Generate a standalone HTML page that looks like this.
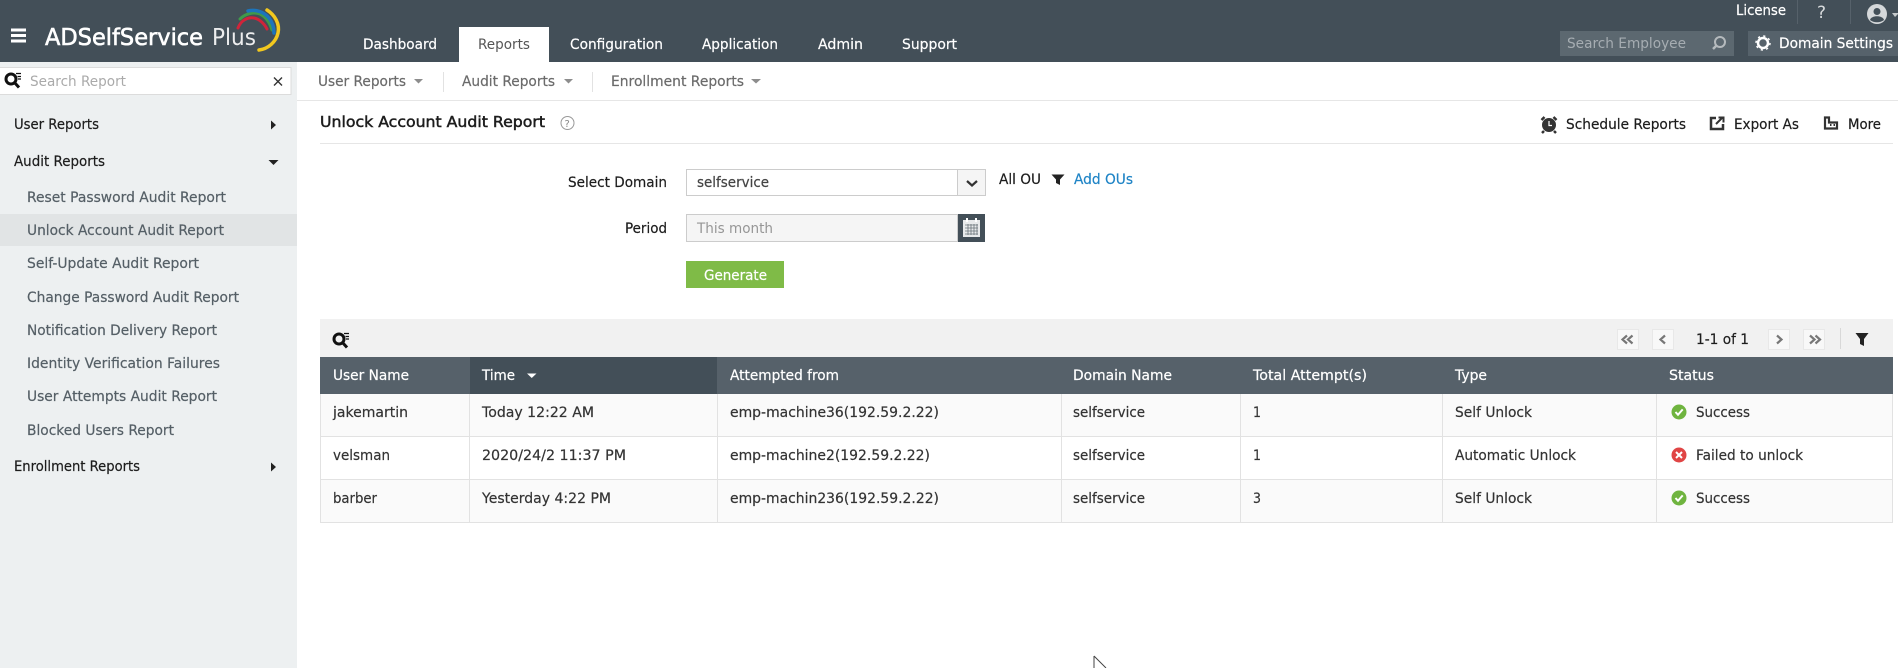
<!DOCTYPE html>
<html lang="en"><head><meta charset="utf-8"><title>Unlock Account Audit Report</title>
<style>
html,body{margin:0;padding:0;width:1898px;height:668px;overflow:hidden;background:#fff}
svg{display:block}
text{font-family:"DejaVu Sans","Liberation Sans",sans-serif;font-size:14px;fill:#333;stroke-width:.2}
.w{fill:#fff;stroke:#fff}.s{fill:#555f66;stroke:#555f66}.g{fill:#6b6b6b;stroke:#6b6b6b}.d{fill:#1d1d1d;stroke:#1d1d1d}
</style></head><body>
<svg width="1898" height="668" viewBox="0 0 1898 668" xmlns="http://www.w3.org/2000/svg">
<defs><g id="mag"><circle cx="7" cy="7" r="5" fill="none" stroke="#111" stroke-width="3"/><path d="M10.5 10.5L15 15.5" stroke="#111" stroke-width="3"/><path d="M12 1.5h5M13.5 4.5h3.5M14 7h3" stroke="#111" stroke-width="1.2"/></g>
<g id="ok"><circle r="7.5" fill="#6fb43f"/><path d="M-3.5 0L-1 2.8L3.7-2.6" fill="none" stroke="#fff" stroke-width="2"/></g></defs>
<rect width="1898" height="62" fill="#434f58"/>
<path d="M11 30h15M11 35.500h15M11 41h15" stroke="#fff" stroke-width="3"/>
<text x="45" y="45" textLength="158" lengthAdjust="spacingAndGlyphs" class="w" style="font-size:23.500px;stroke-width:.6">ADSelfService</text>
<text x="212" y="45" textLength="44" lengthAdjust="spacingAndGlyphs" class="w" style="font-size:23.500px;opacity:.9;stroke-width:0">Plus</text>
<g fill="none" stroke-linecap="round">
<path d="M238 28C241 20 248 17 254 18C259 19 264 23 267 29" stroke="#d0243a" stroke-width="3"/>
<path d="M240 19C246 13 254 12 260 14C266 17 270 23 272 30" stroke="#3f9a4a" stroke-width="3"/>
<path d="M248 11C256 9 264 12 269 18C273 23 274 28 274 33" stroke="#1c75bc" stroke-width="3.500"/>
<path d="M267 10C275 15 280 24 278 33C276 42 268 49 259 50" stroke="#f2c81e" stroke-width="3.500"/>
</g>
<rect x="459" y="27" width="90" height="35" fill="#fff"/>
<text x="363" y="49" textLength="74" lengthAdjust="spacingAndGlyphs" class="w">Dashboard</text>
<text x="478" y="49" textLength="52" lengthAdjust="spacingAndGlyphs" style="fill:#555">Reports</text>
<text x="570" y="49" textLength="93" lengthAdjust="spacingAndGlyphs" class="w">Configuration</text>
<text x="702" y="49" textLength="76" lengthAdjust="spacingAndGlyphs" class="w">Application</text>
<text x="818" y="49" textLength="45" lengthAdjust="spacingAndGlyphs" class="w">Admin</text>
<text x="902" y="49" textLength="55" lengthAdjust="spacingAndGlyphs" class="w">Support</text>
<text x="1736" y="15" textLength="50" lengthAdjust="spacingAndGlyphs" class="w">License</text>
<path d="M1797.500 0v24M1850.500 0v24" stroke="#56616a"/>
<text x="1817" y="18" style="font-size:17px;fill:#d8dbdd">?</text>
<circle cx="1877" cy="14" r="10" fill="#d5d8da"/><circle cx="1877" cy="11.500" r="3.500" fill="#434f58"/><path d="M1870 20c1-5 13-5 14 0c-4 3-10 3-14 0z" fill="#434f58"/><path d="M1892 13h6v1l-3 3z" fill="#c5c9cb"/>
<rect x="1560" y="31" width="174" height="25" fill="#5c6870"/>
<text x="1567" y="48" textLength="119" lengthAdjust="spacingAndGlyphs" style="fill:#a6adb2">Search Employee</text>
<circle cx="1720" cy="42" r="5" fill="none" stroke="#b5babd" stroke-width="2"/><path d="M1716.500 45.500l-3.500 3.500" stroke="#b5babd" stroke-width="2.500"/>
<rect x="1748" y="31" width="150" height="25" fill="#56626b"/>
<circle cx="1763" cy="43" r="5" fill="none" stroke="#fff" stroke-width="2.500"/><circle cx="1763" cy="43" r="7" fill="none" stroke="#fff" stroke-width="1.500" stroke-dasharray="2.200 3.300"/>
<text x="1779" y="48" textLength="114" lengthAdjust="spacingAndGlyphs" class="w">Domain Settings</text>
<rect y="62" width="297" height="606" fill="#edf0f1"/>
<rect x="-1" y="67.500" width="292" height="27" fill="#fff" stroke="#dcdcdc"/>
<use href="#mag" x="4" y="72"/>
<text x="30" y="86" textLength="96" lengthAdjust="spacingAndGlyphs" style="fill:#aaa">Search Report</text>
<path d="M274 77.500l8 8M282 77.500l-8 8" stroke="#333" stroke-width="1.400"/>
<path d="M271 120.500l5 4.500l-5 4.500z" fill="#222"/><path d="M268.500 160h10l-5 5z" fill="#222"/><path d="M271 462.500l5 4.500l-5 4.500z" fill="#222"/>
<rect y="214" width="297" height="32" fill="#e1e4e5"/>
<text x="14" y="129" textLength="85" lengthAdjust="spacingAndGlyphs" class="d">User Reports</text>
<text x="14" y="166" textLength="91" lengthAdjust="spacingAndGlyphs" class="d">Audit Reports</text>
<text x="27" y="202" textLength="199" lengthAdjust="spacingAndGlyphs" class="s">Reset Password Audit Report</text>
<text x="27" y="235" textLength="197" lengthAdjust="spacingAndGlyphs" class="s">Unlock Account Audit Report</text>
<text x="27" y="268" textLength="172" lengthAdjust="spacingAndGlyphs" class="s">Self-Update Audit Report</text>
<text x="27" y="302" textLength="212" lengthAdjust="spacingAndGlyphs" class="s">Change Password Audit Report</text>
<text x="27" y="335" textLength="190" lengthAdjust="spacingAndGlyphs" class="s">Notification Delivery Report</text>
<text x="27" y="368" textLength="193" lengthAdjust="spacingAndGlyphs" class="s">Identity Verification Failures</text>
<text x="27" y="401" textLength="190" lengthAdjust="spacingAndGlyphs" class="s">User Attempts Audit Report</text>
<text x="27" y="435" textLength="147" lengthAdjust="spacingAndGlyphs" class="s">Blocked Users Report</text>
<text x="14" y="471" textLength="126" lengthAdjust="spacingAndGlyphs" class="d">Enrollment Reports</text>
<path d="M297 100.500H1898M320 143.500H1893" stroke="#e6e6e6"/>
<text x="318" y="86" textLength="88" lengthAdjust="spacingAndGlyphs" class="g">User Reports</text>
<path d="M414 79h9l-4.500 4.500zM564 79h9l-4.500 4.500zM751 79h10l-5 4.500z" fill="#8d8d8d"/>
<path d="M443.500 72v20M592.500 72v20" stroke="#e2e2e2"/>
<text x="462" y="86" textLength="93" lengthAdjust="spacingAndGlyphs" class="g">Audit Reports</text>
<text x="611" y="86" textLength="133" lengthAdjust="spacingAndGlyphs" class="g">Enrollment Reports</text>
<text x="320" y="127" textLength="225" lengthAdjust="spacingAndGlyphs" class="d" style="font-size:15.500px;stroke-width:.5">Unlock Account Audit Report</text>
<circle cx="567.500" cy="123" r="6.500" fill="none" stroke="#999"/><text x="564.500" y="127" style="font-size:10px;fill:#888">?</text>
<circle cx="1549" cy="125" r="7" fill="#333"/><path d="M1549 121v4.500h3" fill="none" stroke="#fff" stroke-width="1.200"/><path d="M1541.500 120l3-3M1556.500 120l-3-3M1544 131l-2 2M1554 131l2 2" stroke="#333" stroke-width="2.500"/>
<text x="1566" y="129" textLength="120" lengthAdjust="spacingAndGlyphs" class="d">Schedule Reports</text>
<path d="M1716 118h-5v11h12v-5" fill="none" stroke="#333" stroke-width="2.500"/><path d="M1716 124l6-6M1718.500 117.500h5v5" fill="none" stroke="#333" stroke-width="2"/>
<text x="1734" y="129" textLength="65" lengthAdjust="spacingAndGlyphs" class="d">Export As</text>
<path d="M1825 117.500v11h12v-6h-8v-5z" fill="none" stroke="#333" stroke-width="2.200"/><path d="M1830 125h1.500M1833.500 125h1.500" stroke="#333" stroke-width="2"/>
<text x="1848" y="129" textLength="33" lengthAdjust="spacingAndGlyphs" class="d">More</text>
<text x="568" y="187" textLength="99" lengthAdjust="spacingAndGlyphs" class="d">Select Domain</text>
<rect x="686.500" y="169.500" width="299" height="26" fill="#fff" stroke="#ccc"/>
<rect x="958" y="170" width="27" height="25" fill="#f5f5f5"/><path d="M957.500 170v25" stroke="#ccc"/>
<path d="M967 181l5 4.500l5-4.500" fill="none" stroke="#333" stroke-width="2.200"/>
<text x="697" y="187" textLength="72" lengthAdjust="spacingAndGlyphs" style="fill:#444;stroke:#444">selfservice</text>
<text x="999" y="184" textLength="42" lengthAdjust="spacingAndGlyphs" class="d">All OU</text>
<path d="M1051.500 174.500h13l-4.500 5v5.500l-4-2v-3.500z" fill="#222"/>
<text x="1074" y="184" textLength="59" lengthAdjust="spacingAndGlyphs" style="fill:#1f84c6;stroke:#1f84c6">Add OUs</text>
<text x="625" y="233" textLength="42" lengthAdjust="spacingAndGlyphs" class="d">Period</text>
<rect x="686.500" y="214.500" width="271" height="27" fill="#f5f5f5" stroke="#ccc"/>
<text x="697" y="233" textLength="76" lengthAdjust="spacingAndGlyphs" style="fill:#969696">This month</text>
<rect x="958" y="214" width="27" height="28" fill="#434f58"/>
<rect x="963" y="220" width="17" height="17" fill="#e8eaeb"/><path d="M967 218v4M976 218v4" stroke="#fff" stroke-width="2"/><path d="M965 225h13M965 228h13M965 231h13M965 234h13M968 224v11M971 224v11M974 224v11M977 224v11" stroke="#6a747b" stroke-width=".8"/>
<rect x="686" y="261" width="98" height="27" fill="#7fbb47"/>
<text x="704" y="280" textLength="63" lengthAdjust="spacingAndGlyphs" class="w">Generate</text>
<rect x="320" y="319" width="1573" height="38" fill="#f1f1f1"/>
<use href="#mag" x="332" y="332"/>
<g fill="#f8f8f8" stroke="#e8e8e8"><rect x="1617.500" y="329.500" width="21" height="20"/><rect x="1652.500" y="329.500" width="21" height="20"/><rect x="1768.500" y="329.500" width="21" height="20"/><rect x="1803.500" y="329.500" width="21" height="20"/></g>
<g fill="none" stroke="#777" stroke-width="2.200"><path d="M1627 335.500l-4.500 4l4.500 4M1632.500 335.500l-4.500 4l4.500 4M1665 335.500l-4.500 4l4.500 4M1777 335.500l4.500 4l-4.500 4M1810 335.500l4.500 4l-4.500 4M1815.500 335.500l4.500 4l-4.500 4"/></g>
<text x="1696" y="344" textLength="53" lengthAdjust="spacingAndGlyphs" class="d">1-1 of 1</text>
<path d="M1840.500 328v21" stroke="#d8d8d8"/>
<path d="M1855.500 333h13l-4.500 6v7l-4-2v-5z" fill="#222"/>
<rect x="320" y="357" width="1573" height="37" fill="#56616a"/>
<rect x="470" y="357" width="247" height="37" fill="#434f58"/>
<text x="333" y="380" textLength="76" lengthAdjust="spacingAndGlyphs" class="w">User Name</text>
<text x="482" y="380" textLength="33" lengthAdjust="spacingAndGlyphs" class="w">Time</text>
<path d="M527 373.500h9.500l-4.750 4.500z" fill="#fff"/>
<text x="730" y="380" textLength="109" lengthAdjust="spacingAndGlyphs" class="w">Attempted from</text>
<text x="1073" y="380" textLength="99" lengthAdjust="spacingAndGlyphs" class="w">Domain Name</text>
<text x="1253" y="380" textLength="114" lengthAdjust="spacingAndGlyphs" class="w">Total Attempt(s)</text>
<text x="1455" y="380" textLength="32" lengthAdjust="spacingAndGlyphs" class="w">Type</text>
<text x="1669" y="380" textLength="45" lengthAdjust="spacingAndGlyphs" class="w">Status</text>
<rect x="320" y="394" width="1573" height="42" fill="#fafafa"/><rect x="320" y="479" width="1573" height="43" fill="#fafafa"/>
<path d="M320 436.500H1893M320 479.500H1893M320 522.500H1893M320.500 394v129M469.500 394v129M717.500 394v129M1061.500 394v129M1240.500 394v129M1442.500 394v129M1656.500 394v129M1892.500 394v129" stroke="#e2e2e2" fill="none"/>
<g style="fill:#333;stroke:#333">
<text x="333" y="417" textLength="75" lengthAdjust="spacingAndGlyphs">jakemartin</text>
<text x="482" y="417" textLength="112" lengthAdjust="spacingAndGlyphs">Today 12:22 AM</text>
<text x="730" y="417" textLength="209" lengthAdjust="spacingAndGlyphs">emp-machine36(192.59.2.22)</text>
<text x="1073" y="417" textLength="72" lengthAdjust="spacingAndGlyphs">selfservice</text>
<text x="1253" y="417" textLength="8" lengthAdjust="spacingAndGlyphs">1</text>
<text x="1455" y="417" textLength="77" lengthAdjust="spacingAndGlyphs">Self Unlock</text>
<text x="1696" y="417" textLength="54" lengthAdjust="spacingAndGlyphs">Success</text>
<text x="333" y="460" textLength="57" lengthAdjust="spacingAndGlyphs">velsman</text>
<text x="482" y="460" textLength="144" lengthAdjust="spacingAndGlyphs">2020/24/2 11:37 PM</text>
<text x="730" y="460" textLength="200" lengthAdjust="spacingAndGlyphs">emp-machine2(192.59.2.22)</text>
<text x="1073" y="460" textLength="72" lengthAdjust="spacingAndGlyphs">selfservice</text>
<text x="1253" y="460" textLength="8" lengthAdjust="spacingAndGlyphs">1</text>
<text x="1455" y="460" textLength="121" lengthAdjust="spacingAndGlyphs">Automatic Unlock</text>
<text x="1696" y="460" textLength="107" lengthAdjust="spacingAndGlyphs">Failed to unlock</text>
<text x="333" y="503" textLength="44" lengthAdjust="spacingAndGlyphs">barber</text>
<text x="482" y="503" textLength="129" lengthAdjust="spacingAndGlyphs">Yesterday 4:22 PM</text>
<text x="730" y="503" textLength="209" lengthAdjust="spacingAndGlyphs">emp-machin236(192.59.2.22)</text>
<text x="1073" y="503" textLength="72" lengthAdjust="spacingAndGlyphs">selfservice</text>
<text x="1253" y="503" textLength="8" lengthAdjust="spacingAndGlyphs">3</text>
<text x="1455" y="503" textLength="77" lengthAdjust="spacingAndGlyphs">Self Unlock</text>
<text x="1696" y="503" textLength="54" lengthAdjust="spacingAndGlyphs">Success</text>
</g>
<use href="#ok" x="1679" y="412"/><use href="#ok" x="1679" y="498"/>
<circle cx="1679" cy="455" r="7.500" fill="#e04545"/><path d="M1676 452l6 6M1682 452l-6 6" stroke="#fff" stroke-width="2"/>
<path d="M1094 656v12M1094 656l12 12" stroke="#444" fill="none"/>
</svg>
</body></html>
